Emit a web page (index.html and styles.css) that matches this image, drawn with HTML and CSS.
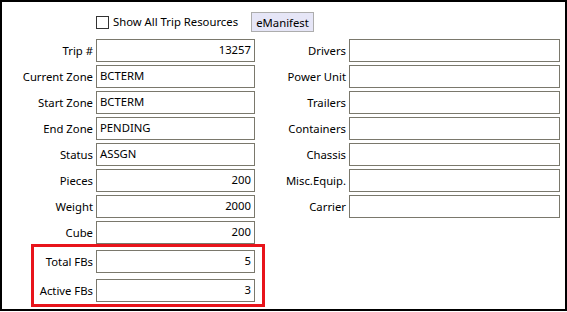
FILE: index.html
```html
<!DOCTYPE html>
<html lang="en">
    <head>
        <meta charset="UTF-8">
        <title>Trip Resources</title>
        <link rel="stylesheet" href="styles.css">
    </head>
    <body>
        <div class="frame">
            <div class="topbar">
                <label class="check"><span class="box"></span>Show All Trip Resources</label>
                <button type="button" class="btn">eManifest</button>
            </div>
            <div class="columns">
                <div class="col col-left">
                    <div class="row"><span class="lbl">Trip #</span><span class="field num">13257</span></div>
                    <div class="row"><span class="lbl">Current Zone</span><span class="field">BCTERM</span></div>
                    <div class="row"><span class="lbl">Start Zone</span><span class="field">BCTERM</span></div>
                    <div class="row"><span class="lbl">End Zone</span><span class="field">PENDING</span></div>
                    <div class="row"><span class="lbl">Status</span><span class="field">ASSGN</span></div>
                    <div class="row"><span class="lbl">Pieces</span><span class="field num">200</span></div>
                    <div class="row"><span class="lbl">Weight</span><span class="field num">2000</span></div>
                    <div class="row"><span class="lbl">Cube</span><span class="field num">200</span></div>
                    <div class="fbbox">
                        <div class="row"><span class="lbl">Total FBs</span><span class="field num">5</span></div>
                        <div class="row"><span class="lbl">Active FBs</span><span class="field num">3</span></div>
                    </div>
                </div>
                <div class="col col-right">
                    <div class="row"><span class="lbl">Drivers</span><span class="field"></span></div>
                    <div class="row"><span class="lbl">Power Unit</span><span class="field"></span></div>
                    <div class="row"><span class="lbl">Trailers</span><span class="field"></span></div>
                    <div class="row"><span class="lbl">Containers</span><span class="field"></span></div>
                    <div class="row"><span class="lbl">Chassis</span><span class="field"></span></div>
                    <div class="row"><span class="lbl">Misc.Equip.</span><span class="field"></span></div>
                    <div class="row"><span class="lbl">Carrier</span><span class="field"></span></div>
                </div>
            </div>
        </div>
    </body>
</html>
```

FILE: styles.css
```css
body {
    margin: 0;
    background: #fff;
    font-family: "Segoe UI", "Noto Sans", sans-serif;
    font-size: 11.3px;
    color: #000;
}

.frame {
    width: 567px;
    height: 311px;
    box-sizing: border-box;
    border: 2px solid #000;
}

.topbar {
    display: flex;
    align-items: center;
    height: 20px;
    margin-top: 10px;
    padding-left: 94px;
}

.check {
    display: flex;
    align-items: center;
    line-height: 20px;
}

.box {
    width: 11px;
    height: 11px;
    border: 1px solid #333;
    margin-right: 4px;
    background: #fff;
}

.btn {
    margin-left: 13px;
    height: 20px;
    width: 63px;
    padding: 0;
    font: inherit;
    color: #000;
    background: #e6e6f7;
    border: 1px solid #adadad;
}

.columns {
    display: flex;
    margin-top: 7px;
}

.col-left {
    width: 253px;
    flex: none;
}

.row {
    display: flex;
    height: 23px;
    margin-bottom: 3px;
}

.lbl {
    width: 94px;
    padding-right: 3px;
    box-sizing: border-box;
    text-align: right;
    line-height: 23px;
    white-space: nowrap;
}

.field {
    box-sizing: border-box;
    height: 23px;
    border: 1px solid #7a786c;
    padding: 0 3px;
    line-height: 20px;
    background: #fff;
}

.col-left .field {
    width: 159px;
}

.col-right .field {
    width: 211px;
}

.num {
    text-align: right;
}

.fbbox {
    width: 234px;
    box-sizing: border-box;
    margin-left: 29px;
    margin-top: -3px;
    border: 3px solid #e8141b;
    padding: 3px 7px 2px 0;
}

.fbbox .row {
    margin-bottom: 6px;
}

.fbbox .row:last-child {
    margin-bottom: 0;
}

.fbbox .lbl {
    width: auto;
    flex: 1;
}
```
